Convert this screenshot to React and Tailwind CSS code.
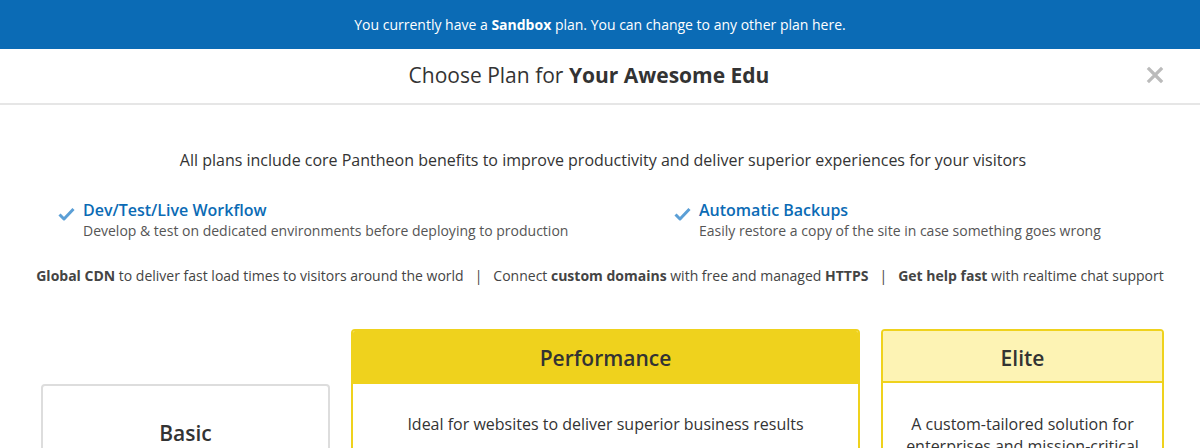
export default function App() {
  const font = { fontFamily: '"Open Sans", "Noto Sans", sans-serif' };
  return (
    <div className="w-[1200px] h-[448px] overflow-hidden bg-white text-[#333]" style={font}>
      {/* Plan banner */}
      <div className="h-[49px] bg-[#0b6bb5] flex items-center justify-center text-white text-[14px]">
        <p>
          You currently have a <span className="font-bold">Sandbox</span> plan. You can change to any other plan here.
        </p>
      </div>

      {/* Modal header */}
      <div className="relative h-[56px] border-b-2 border-[#e6e6e6] flex items-center justify-center pr-[22px]">
        <h1 className="text-[21px] text-[#333]">
          Choose Plan for <span className="font-bold">Your Awesome Edu</span>
        </h1>
        <button className="absolute right-[36px] top-[17px] text-[#bbb]">
          <svg width="18" height="18" viewBox="0 0 18 18">
            <path d="M3 3 L15 15 M15 3 L3 15" stroke="currentColor" strokeWidth="3.2" strokeLinecap="square" />
          </svg>
        </button>
      </div>

      {/* Benefits */}
      <div className="pt-[43px]">
        <p className="text-center text-[16px] text-[#333] pl-[6px]">
          All plans include core Pantheon benefits to improve productivity and deliver superior experiences for your visitors
        </p>

        <div className="mt-[28px] grid grid-cols-2 pl-[58px]">
          {[
            { title: 'Dev/Test/Live Workflow', desc: 'Develop & test on dedicated environments before deploying to production' },
            { title: 'Automatic Backups', desc: 'Easily restore a copy of the site in case something goes wrong' },
          ].map((f, i) => (
            <div key={i} className={`flex gap-[8px] ${i === 1 ? 'pl-[45px]' : ''}`}>
              <svg width="17" height="14" viewBox="0 0 17 14" className="mt-[7px] shrink-0">
                <path d="M1.5 7.5 L6 12 L15.5 2" fill="none" stroke="#5b9fd6" strokeWidth="3" strokeLinejoin="round" />
              </svg>
              <div>
                <div className="text-[16px] font-semibold text-[#0b6bb5] leading-[21px]">{f.title}</div>
                <div className="text-[14px] text-[#555] leading-[20px]">{f.desc}</div>
              </div>
            </div>
          ))}
        </div>

        <p className="mt-[24px] text-center text-[14px] text-[#444]">
          <span className="font-bold">Global CDN</span> to deliver fast load times to visitors around the world
          <span className="mx-[11px]">|</span>
          Connect <span className="font-bold">custom domains</span> with free and managed <span className="font-bold">HTTPS</span>
          <span className="mx-[11px]">|</span>
          <span className="font-bold">Get help fast</span> with realtime chat support
        </p>
      </div>

      {/* Plan cards */}
      <div className="mt-[43px] flex items-start gap-[21px] pl-[41px]">
        <div className="mt-[55px] w-[289px] h-[120px] border-2 border-[#ddd] rounded-[4px] pt-[32px] text-center">
          <h2 className="text-[21px] font-semibold text-[#333]">Basic</h2>
        </div>

        <div className="w-[509px] h-[180px] border-2 border-[#efd21d] rounded-[4px] overflow-hidden">
          <div className="h-[53px] bg-[#efd21d] flex items-center justify-center pt-[2px]">
            <h2 className="text-[21px] font-semibold text-[#333]">Performance</h2>
          </div>
          <p className="pt-[28px] text-center text-[16px] text-[#333]">
            Ideal for websites to deliver superior business results
          </p>
        </div>

        <div className="w-[283px] h-[180px] border-2 border-[#efd21d] rounded-[4px] overflow-hidden">
          <div className="h-[52px] bg-[#fdf3b4] border-b-2 border-[#efd21d] flex items-center justify-center pt-[5px]">
            <h2 className="text-[21px] font-semibold text-[#333]">Elite</h2>
          </div>
          <p className="pt-[30px] px-[20px] text-center text-[16px] leading-[22px] text-[#333]">
            A custom-tailored solution for enterprises and mission-critical sites
          </p>
        </div>
      </div>
    </div>
  );
}
